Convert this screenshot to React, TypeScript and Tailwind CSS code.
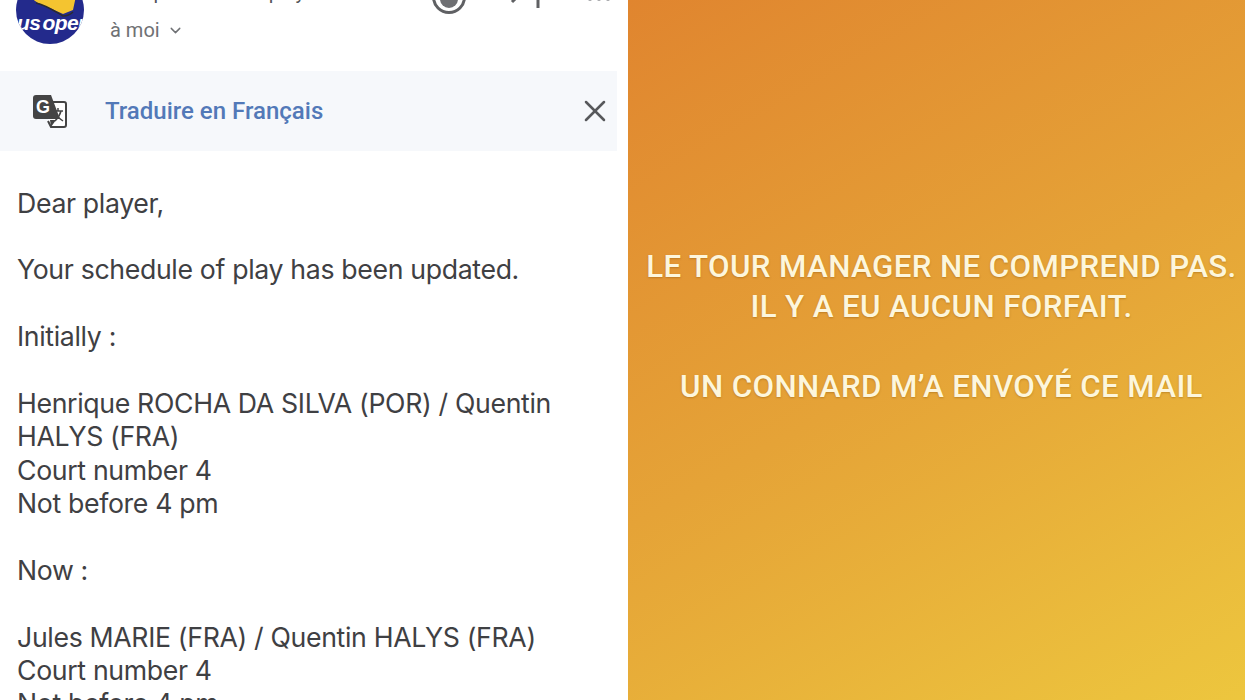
import { ChevronDown, X } from 'lucide-react';

function UsOpenLogo() {
  return (
    <svg viewBox="0 0 68 68" className="-mt-[24px] ml-[16px] h-[68px] w-[68px] shrink-0">
      <defs>
        <clipPath id="logo-clip">
          <circle cx="34" cy="34" r="34" />
        </clipPath>
      </defs>
      <g clipPath="url(#logo-clip)">
        <rect width="68" height="68" fill="#232a8c" />
        <path d="M12 20 L60 20 L57 34 L47 38 L36 33 L22 27 Z" fill="#f4c430" />
        <path d="M20 27 C30 29 40 36 47 40 C51 40 55 38 57 36" fill="none" stroke="#2b2a30" strokeWidth="1.5" />
        <text
          x="1"
          y="54"
          fill="#fff"
          fontSize="21"
          fontWeight="700"
          fontStyle="italic"
          letterSpacing="-0.6"
          wordSpacing="-3"
          fontFamily="'Liberation Sans', sans-serif"
        >
          us open
        </text>
      </g>
    </svg>
  );
}

function TranslateIcon() {
  return (
    <svg viewBox="0 0 34 34" className="h-[34px] w-[34px]">
      <path d="M14 8 H31 a2 2 0 0 1 2 2 V31 a2 2 0 0 1 -2 2 H18 L15 27" fill="#fff" stroke="#444" strokeWidth="2" />
      <path d="M3 1 H18 L27 25 H3 a3 3 0 0 1 -3 -3 V4 a3 3 0 0 1 3 -3 Z" fill="#444" />
      <path d="M18 33 L23 26 H17 Z" fill="#444" />
      <path d="M21 17 H30 M25 14 V17 M28 17 C27 21 25 24 22 27 M23 20 C24 23 27 25 30 27" fill="none" stroke="#444" strokeWidth="1.5" />
      <text x="3" y="19" fill="#fff" fontSize="18" fontWeight="700" fontFamily="'Liberation Sans', sans-serif">
        G
      </text>
    </svg>
  );
}

function HeaderActions() {
  return (
    <div className="ml-auto flex items-start">
      <svg viewBox="0 0 34 34" className="-mt-[20px] h-[34px] w-[34px]">
        <circle cx="17" cy="17" r="15.5" fill="none" stroke="#5f6063" strokeWidth="3" />
        <path d="M8 19 H26 A9 9 0 0 1 8 19 Z" fill="#6f7073" />
      </svg>
      <svg viewBox="0 0 34 20" className="ml-[44px] -mt-[12px] h-[20px] w-[34px]">
        <path d="M12 4 L2 14 M28 4 V20" fill="none" stroke="#5f6063" strokeWidth="3" />
      </svg>
      <div className="ml-[44px] -mt-[3px] mr-[18px] flex gap-[5px]">
        <span className="h-[4px] w-[4px] rounded-full bg-[#a5a6a9]" />
        <span className="h-[4px] w-[4px] rounded-full bg-[#a5a6a9]" />
        <span className="h-[4px] w-[4px] rounded-full bg-[#a5a6a9]" />
      </div>
    </div>
  );
}

const body = [
  'Dear player,',
  '',
  'Your schedule of play has been updated.',
  '',
  'Initially :',
  '',
  'Henrique ROCHA DA SILVA (POR) / Quentin',
  'HALYS (FRA)',
  'Court number 4',
  'Not before 4 pm',
  '',
  'Now :',
  '',
  'Jules MARIE (FRA) / Quentin HALYS (FRA)',
  'Court number 4',
  'Not before 4 pm',
];

export default function App() {
  return (
    <div className="flex h-[700px] w-[1245px] overflow-hidden bg-white font-['Liberation_Sans',sans-serif]">
      <div className="flex w-[628px] shrink-0 flex-col overflow-hidden">
        <div className="flex h-[71px] shrink-0 items-start">
          <UsOpenLogo />
          <div className="ml-[26px] flex flex-col">
            <span className="-mt-[21px] h-[26px] font-['Roboto',sans-serif] text-[20px] leading-[26px] text-[#55565a]">
              US Open Order of play
            </span>
            <div className="mt-[12px] flex items-center gap-[7px] font-['Roboto',sans-serif] text-[20px] leading-[26px] text-[#6f7174]">
              à moi
              <ChevronDown className="h-[17px] w-[17px]" strokeWidth={2} />
            </div>
          </div>
          <HeaderActions />
        </div>
        <div className="flex h-[80px] w-[617px] shrink-0 items-center bg-[#f6f8fb] pl-[33px] pr-[4px]">
          <TranslateIcon />
          <span className="ml-[38px] font-['Roboto',sans-serif] text-[24px] font-medium text-[#5279b8]">
            Traduire en Français
          </span>
          <X className="ml-auto h-[36px] w-[36px] text-[#57585b]" strokeWidth={1.7} />
        </div>
        <div className="mt-[35.6px] shrink-0 pl-[17px] font-['Inter',sans-serif] text-[26.7px] leading-[33.4px] tracking-[-0.35px] text-[#3f4043]">
          {body.map((text, i) => (
            <p key={i} className="h-[33.4px] whitespace-pre">
              {text}
            </p>
          ))}
        </div>
      </div>
      <div className="flex flex-1 flex-col items-center whitespace-nowrap bg-[linear-gradient(150deg,#e0852f_0%,#e5a337_50%,#edc63e_100%)] pl-[10px] pt-[247px] text-center font-['Roboto',sans-serif] text-[31.3px] font-medium leading-[40px] tracking-[0.37px] text-[#fdf6dc] [text-shadow:0_1px_2px_rgba(120,70,0,0.35)]">
        <p>LE TOUR MANAGER NE COMPREND PAS.</p>
        <p>IL Y A EU AUCUN FORFAIT.</p>
        <p className="mt-[40px]">UN CONNARD M’A ENVOYÉ CE MAIL</p>
      </div>
    </div>
  );
}
